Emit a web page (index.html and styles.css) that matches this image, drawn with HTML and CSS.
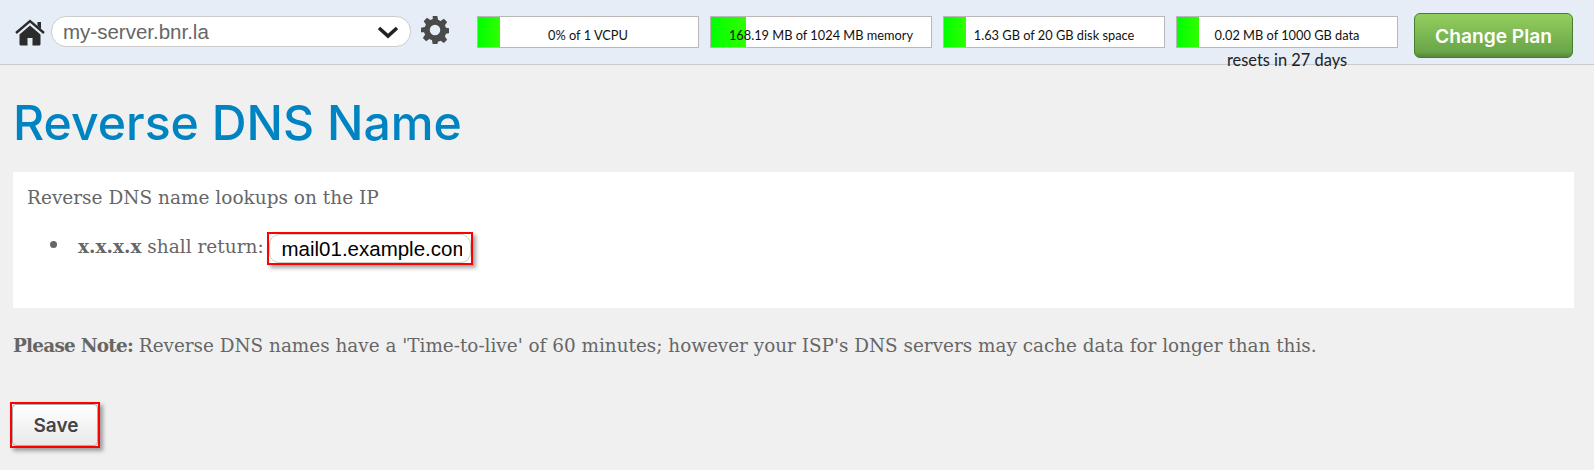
FILE: index.html
```html
<!DOCTYPE html>
<html lang="en">
<head>
  <meta charset="UTF-8">
  <title>Reverse DNS Name</title>
  <link rel="stylesheet" href="styles.css">
</head>
<body>
  <header class="topbar">
    <svg class="home-icon" viewBox="0 0 30 27" aria-label="Home">
      <path d="M15 6.500 4.500 15.500V25a1.500 1.500 0 0 0 1.500 1.500h6.500v-7.500h5v7.500H24a1.500 1.500 0 0 0 1.500-1.500v-9.500z" fill="#2b2b2b"/>
      <path d="M1 14 15 2l14 12" fill="none" stroke="#2b2b2b" stroke-width="2.400"/>
      <path d="M22.500 3h3.500v7l-3.500-3z" fill="#2b2b2b"/>
    </svg>
    <div class="server-select">
      <span>my-server.bnr.la</span>
      <svg class="chevron" viewBox="0 0 22 14"><path d="M2 3l9 8 9-8" fill="none" stroke="#222" stroke-width="3.600"/></svg>
    </div>
    <svg class="gear-icon" viewBox="0 0 24 24" aria-label="Settings">
      <path fill="#4a4a4a" fill-rule="evenodd" d="M10 0h4l.6 3.300 2.200.9 2.800-1.900 2.800 2.800-1.900 2.800.9 2.200 3.300.6v4l-3.300.6-.9 2.200 1.900 2.800-2.800 2.800-2.800-1.900-2.200.9L14 24h-4l-.6-3.300-2.200-.9-2.800 1.900-2.800-2.800 1.900-2.800-.9-2.200L0 14v-4l3.300-.6.9-2.200-1.900-2.800 2.800-2.800 2.800 1.900 2.200-.9zM12 7.500a4.500 4.500 0 1 0 0 9 4.500 4.500 0 0 0 0-9z"/>
    </svg>

    <div class="meters">
      <div class="meter">
        <div class="meter-fill" style="width: 22px"></div>
        <div class="meter-label">0% of 1 VCPU</div>
      </div>
      <div class="meter">
        <div class="meter-fill" style="width: 35px"></div>
        <div class="meter-label">168.19 MB of 1024 MB memory</div>
      </div>
      <div class="meter">
        <div class="meter-fill" style="width: 22px"></div>
        <div class="meter-label">1.63 GB of 20 GB disk space</div>
      </div>
      <div class="meter">
        <div class="meter-fill" style="width: 22px"></div>
        <div class="meter-label">0.02 MB of 1000 GB data</div>
        <div class="meter-note">resets in 27 days</div>
      </div>
    </div>
    <button class="btn-plan">Change Plan</button>
  </header>

  <main class="content">
    <h1>Reverse DNS Name</h1>
    <div class="panel">
      <p>Reverse DNS name lookups on the IP</p>
      <ul>
        <li><strong>x.x.x.x</strong> shall return: <span class="red-box input-box"><input class="rdns-input" type="text" value="mail01.example.com"></span></li>
      </ul>
    </div>
    <p class="note"><strong>Please Note:</strong> Reverse DNS names have a 'Time-to-live' of 60 minutes; however your ISP's DNS servers may cache data for longer than this.</p>
    <span class="red-box save-box"><button class="btn-save">Save</button></span>
  </main>
</body>
</html>
```

FILE: styles.css
```css
html, body {
  margin: 0;
  padding: 0;
  height: 100%;
  background-color: #f0f0f0;
  color: #666;
  font-family: "DejaVu Serif", serif;
  overflow: hidden;
}

.topbar {
  display: flex;
  align-items: flex-start;
  height: 48px;
  padding: 16px 0 0 15px;
  background-color: #e6edf6;
  border-bottom: 1px solid #c8ccd0;
}

.home-icon {
  width: 30px;
  height: 27px;
  margin: 3px 6px 0 0;
  flex: none;
}

.server-select {
  display: flex;
  align-items: center;
  justify-content: space-between;
  box-sizing: border-box;
  width: 360px;
  height: 31px;
  padding: 1px 11px 0 11px;
  background-color: #fff;
  border: 1px solid #ccc;
  border-radius: 15px;
  font-family: "Liberation Sans", sans-serif;
  font-size: 20.500px;
  color: #666;
}

.chevron {
  width: 22px;
  height: 14px;
}

.gear-icon {
  width: 28px;
  height: 28px;
  margin: 0 0 0 10px;
  flex: none;
}

.meters {
  display: flex;
  gap: 11px;
  margin-left: 28px;
}

.meter {
  position: relative;
  box-sizing: border-box;
  width: 222px;
  height: 32px;
  background-color: #fff;
  border: 1px solid #b8b8b8;
}

.meter-fill {
  position: absolute;
  top: 0;
  bottom: 0;
  left: 0;
  background: linear-gradient(90deg, #00ff00, #30ff00);
}

.meter-label {
  position: relative;
  padding-top: 9px;
  text-align: center;
  font-family: Lato, sans-serif;
  font-size: 12.800px;
  line-height: 18px;
  color: #111;
}

.meter-note {
  position: absolute;
  top: 33px;
  left: 0;
  right: 0;
  text-align: center;
  font-family: Lato, sans-serif;
  font-size: 16.400px;
  line-height: 20px;
  color: #222;
}

.btn-plan {
  box-sizing: border-box;
  width: 159px;
  height: 45px;
  margin: -3px 0 0 16px;
  padding: 0;
  background: linear-gradient(#93cf5f 0%, #6aa548 88%, #55873a 100%);
  border: 1px solid #44802c;
  border-radius: 6px;
  color: #fff;
  font-family: Inter, sans-serif;
  font-size: 19.200px;
  font-weight: 600;
}

.content {
  padding: 0 20px 0 13px;
}

h1 {
  margin: 30px 0 21px;
  font-family: Inter, sans-serif;
  font-size: 48.200px;
  font-weight: 500;
  line-height: 56px;
  color: #0083c1;
}

.panel {
  box-sizing: border-box;
  height: 136px;
  padding: 14px 14px 0;
  background-color: #fff;
  font-size: 18.500px;
}

.panel p {
  margin: 0 0 21px;
  line-height: 24px;
}

.panel ul {
  margin: 0;
  padding-left: 51px;
  list-style: none;
}

.panel li {
  position: relative;
}

.panel li::before {
  content: "";
  position: absolute;
  left: -28px;
  top: 10px;
  width: 7px;
  height: 7px;
  border-radius: 50%;
  background-color: #666;
}

.red-box {
  display: inline-block;
  vertical-align: middle;
  border: 2px solid #f00;
  box-shadow: 3px 3px 4px rgba(0, 0, 0, 0.35);
}

.input-box {
  margin: 1px 0 0 -3px;
}

.rdns-input {
  display: block;
  box-sizing: border-box;
  width: 202px;
  height: 29px;
  padding: 0 8px 0 12px;
  border: 1px solid #ccc;
  border-radius: 10px;
  outline: none;
  font-family: "Liberation Sans", sans-serif;
  font-size: 20.500px;
  color: #000;
}

.note {
  margin: 24px 0 0;
  font-size: 18.400px;
  line-height: 28px;
}

.note strong {
  letter-spacing: -0.75px;
}

.save-box {
  display: block;
  width: max-content;
  margin: 42px 0 0 -3px;
}

.btn-save {
  display: block;
  box-sizing: border-box;
  width: 86px;
  height: 42px;
  padding: 1px 0 0 2px;
  background: linear-gradient(#fff, #e9e9e9);
  border: 1px solid #aaa;
  border-radius: 4px;
  font-family: Inter, sans-serif;
  font-size: 19px;
  font-weight: 600;
  color: #444;
}
```
